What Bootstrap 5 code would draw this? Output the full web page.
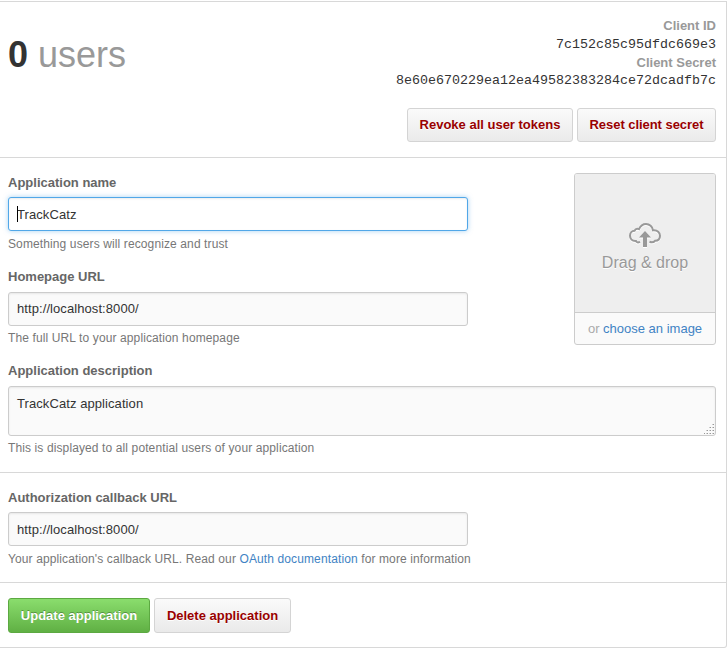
<!DOCTYPE html>
<html lang="en">
<head>
<meta charset="utf-8">
<meta name="viewport" content="width=device-width, initial-scale=1">
<title>Application settings</title>
<link href="https://cdn.jsdelivr.net/npm/bootstrap@5.3.0/dist/css/bootstrap.min.css" rel="stylesheet">
<style>
body{font-family:"Liberation Sans",Arial,sans-serif;font-size:13px;line-height:18px;color:#333;background:#fff;overflow:hidden}
.panel{width:727px;height:647px;margin-top:1px;border:solid #d8d8d8;border-width:1px 1px 1px 0;border-radius:0 0 3px 0}
.sect{padding:15px 10px 0 8px;border-bottom:1px solid #d8d8d8}
.sect:last-child{border-bottom:0}
.sect-head{height:156px}
.sect-form{height:315px}
.sect-auth{height:110px}
.counter{font-size:36px;line-height:40px;color:#999;padding-top:18px}
.counter strong{color:#333}
.keys{margin-bottom:-1px}
.keys dt{color:#999;line-height:18px}
.keys dd{margin:0;font-family:"Liberation Mono","Courier New",monospace;font-size:13.33px;line-height:19px}
.keys dd:last-child{line-height:17px}
.btn-gh{--bs-btn-font-size:13px;--bs-btn-line-height:18px;--bs-btn-padding-x:0;--bs-btn-padding-y:7px;--bs-btn-border-radius:3px;--bs-btn-font-weight:700;--bs-btn-color:#900;--bs-btn-border-color:#d4d4d4;background-image:linear-gradient(#fafafa,#eaeaea);text-shadow:0 1px 0 rgba(255,255,255,.9);white-space:nowrap}
.btn-go{--bs-btn-color:#fff;--bs-btn-border-color:#5ca941;background-image:linear-gradient(#8add6d,#60b044);text-shadow:0 -1px 0 rgba(0,0,0,.3)}
.w-revoke{width:166px}.w-reset{width:139px}.w-update{width:142px}.w-delete{width:137px}
.tall{height:35px}
.reset-label{letter-spacing:-.05px}
.form-label{display:block;font-weight:700;color:#666;line-height:20px;margin:0 0 4px}
.form-control{font-size:13px;line-height:18px;padding:7px 8px;border:1px solid #ccc;border-radius:3px;background:#fafafa;color:#333;box-shadow:inset 0 1px 2px rgba(0,0,0,.075);resize:none;letter-spacing:.08px}
input.form-control{width:460px;height:34px}
textarea.form-control{height:50px;display:block;padding-top:8px}
.form-control.active-field{background:#fff;border-color:#51a7e8;box-shadow:inset 0 1px 2px rgba(0,0,0,.075),0 0 5px rgba(81,167,232,.5)}
.caret-line{left:9px;top:9px;width:1px;height:16px;background:#000}
.grip{right:2px;bottom:2px}
.hint{font-size:12px;line-height:18px;color:#777;margin:4px 0 0;letter-spacing:.115px}
.group{height:94px}
.low .form-label{margin-bottom:5px}
.low .hint{margin-top:3px}
#home{padding-top:6px;padding-bottom:8px}
a{color:#4183c4;text-decoration:none}
.drop{width:142px;height:172px;border:1px solid #ccc;border-radius:3px;background:#fafafa;overflow:hidden}
.drop-zone{height:139px;background:#eee;border-bottom:1px solid #ccc;color:#999;font-size:16px;line-height:20px;text-shadow:0 1px 0 #fff;padding-top:49px}
.drop-foot{color:#aaa;line-height:31px}
</style>
<script src="https://cdn.jsdelivr.net/npm/bootstrap@5.3.0/dist/js/bootstrap.bundle.min.js"></script>
</head>
<body>
<main class="panel">
  <section class="sect sect-head d-flex justify-content-between">
    <h1 class="counter fw-normal m-0"><strong>0</strong> users</h1>
    <div class="text-end">
      <dl class="keys">
        <dt>Client ID</dt><dd>7c152c85c95dfdc669e3</dd>
        <dt>Client Secret</dt><dd>8e60e670229ea12ea49582383284ce72dcadfb7c</dd>
      </dl>
      <div class="d-flex justify-content-end gap-1 mt-3 pt-1">
        <button type="button" class="btn btn-gh w-revoke">Revoke all user tokens</button>
        <button type="button" class="btn btn-gh w-reset reset-label">Reset client secret</button>
      </div>
    </div>
  </section>
  <section class="sect sect-form">
    <div class="d-flex justify-content-between">
      <div>
        <div class="group">
          <label class="form-label" for="name">Application name</label>
          <div class="position-relative"><input id="name" class="form-control active-field" value="TrackCatz"><span class="caret-line position-absolute"></span></div>
          <p class="hint">Something users will recognize and trust</p>
        </div>
        <div class="group low">
          <label class="form-label" for="home">Homepage URL</label>
          <input id="home" class="form-control" value="http://localhost:8000/">
          <p class="hint">The full URL to your application homepage</p>
        </div>
      </div>
      <div class="drop text-center">
        <div class="drop-zone">
          <svg class="d-block mx-auto" width="34" height="26" viewBox="0 0 34 26" fill="none">
            <g stroke="#fff" stroke-width="2" transform="translate(0 1)"><path d="M12 18.800C10 19.800 8.500 19.500 8 18C4 18.300 2 15.800 2 12.800C2 9.800 4 7.800 6.500 7.800C7.500 5.800 9.500 5.500 11 6.100C12.500 2.800 15 1 18 1C21.500 1 24.500 3.800 25 7.300C29.500 6.800 32 9.700 32 12.800C32 15.800 30 17.800 27 17.800C25.500 19.600 23.500 19.600 21.500 18.800"/><path d="M17 8L23 14.500H19V24H15V14.500H11Z" fill="#fff" stroke="none"/></g>
            <path stroke="#999" stroke-width="2" d="M12 18.800C10 19.800 8.500 19.500 8 18C4 18.300 2 15.800 2 12.800C2 9.800 4 7.800 6.500 7.800C7.500 5.800 9.500 5.500 11 6.100C12.500 2.800 15 1 18 1C21.500 1 24.500 3.800 25 7.300C29.500 6.800 32 9.700 32 12.800C32 15.800 30 17.800 27 17.800C25.500 19.600 23.500 19.600 21.500 18.800"/>
            <path fill="#999" d="M17 8L23 14.500H19V24H15V14.500H11Z"/>
          </svg>
          <div class="pt-1">Drag &amp; drop</div>
        </div>
        <div class="drop-foot">or <a href="#">choose an image</a></div>
      </div>
    </div>
    <div class="low">
      <label class="form-label" for="desc">Application description</label>
      <div class="position-relative">
        <textarea id="desc" class="form-control">TrackCatz application</textarea>
        <svg class="grip position-absolute" width="10" height="10" viewBox="0 0 10 10" fill="none" stroke="#999" shape-rendering="crispEdges"><path d="M9 .5h1M6 3.500h1M9 3.500h1M3 6.500h1M6 6.500h1M9 6.500h1M0 9.500h1M3 9.500h1M6 9.500h1M9 9.500h1"/><path stroke="#ccc" d="M8 .5h1M5 3.500h1M8 3.500h1M2 6.500h1M5 6.500h1M8 6.500h1M2 9.500h1M5 9.500h1M8 9.500h1"/></svg>
      </div>
      <p class="hint">This is displayed to all potential users of your application</p>
    </div>
  </section>
  <section class="sect sect-auth">
    <label class="form-label" for="callback">Authorization callback URL</label>
    <input id="callback" class="form-control" value="http://localhost:8000/">
    <p class="hint">Your application's callback URL. Read our <a href="#">OAuth documentation</a> for more information</p>
  </section>
  <section class="sect d-flex gap-1">
    <button type="button" class="btn btn-gh btn-go w-update tall">Update application</button>
    <button type="button" class="btn btn-gh w-delete tall">Delete application</button>
  </section>
</main>
</body>
</html>
